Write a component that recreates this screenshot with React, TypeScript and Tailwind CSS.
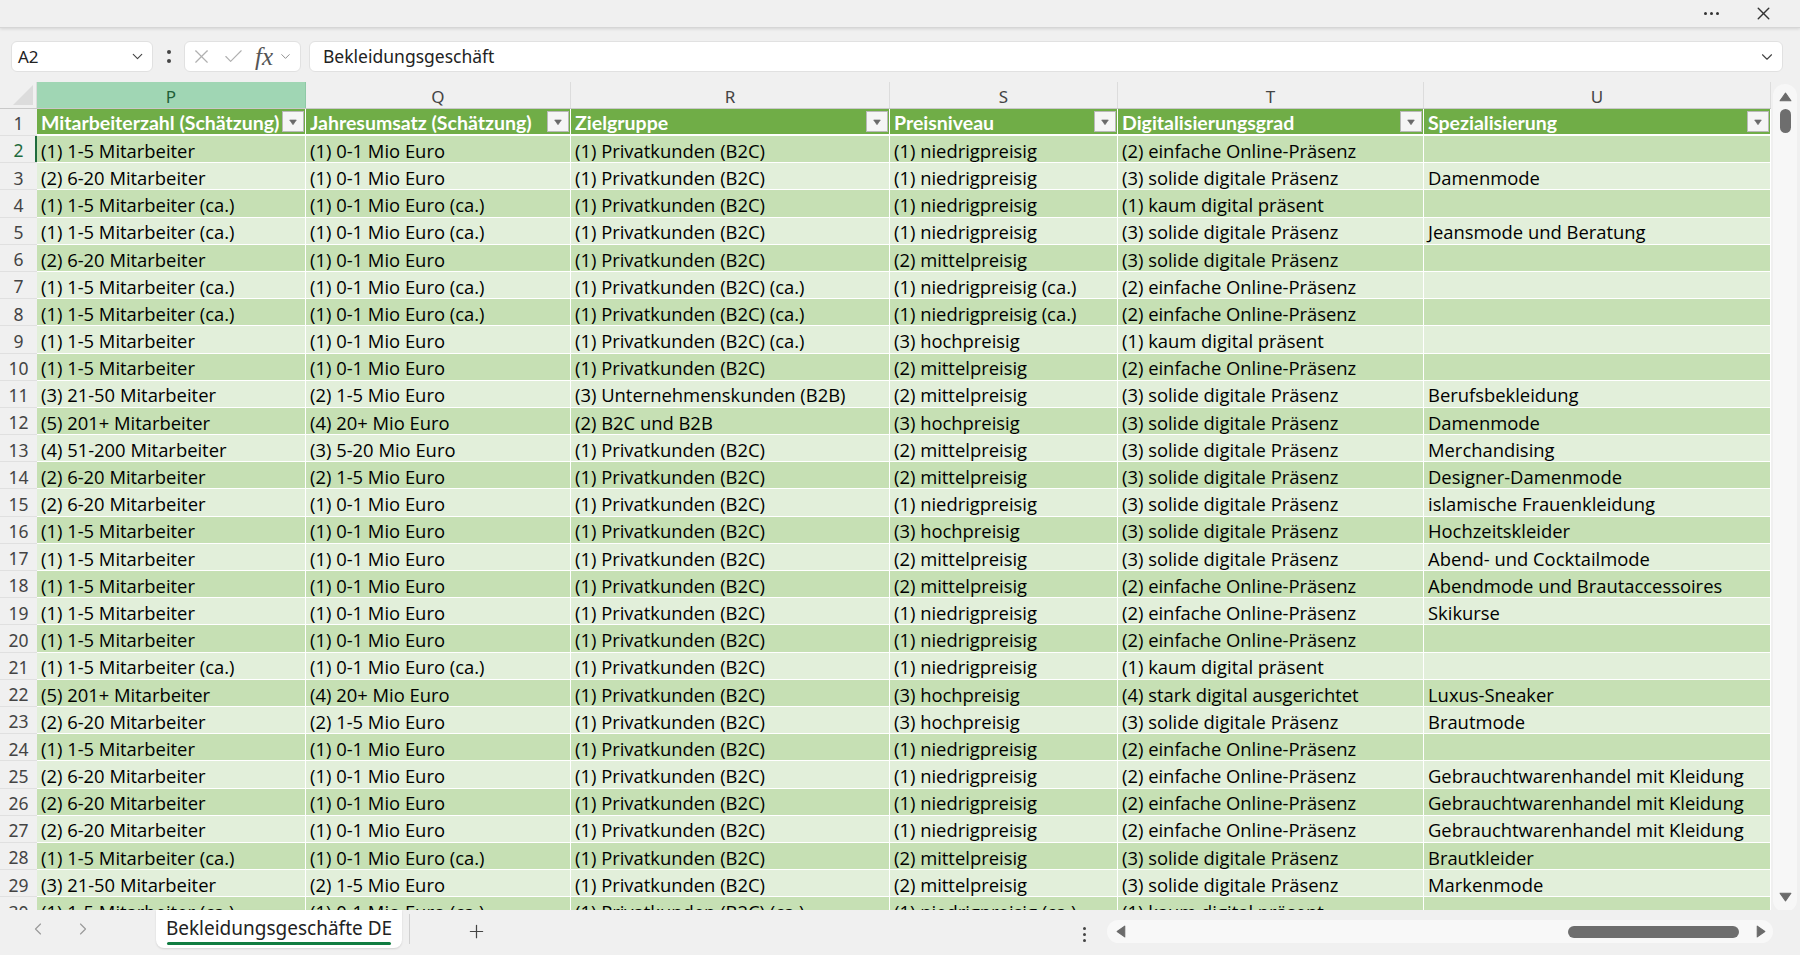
import { ChevronDown, ChevronLeft, ChevronRight, Check, Plus, X } from "lucide-react";

const DATA_FONT = { fontFamily: '"Open Sans", "Noto Sans", sans-serif' };
const HEAD_FONT = { fontFamily: 'Lato, "Open Sans", sans-serif' };
const UI_FONT = { fontFamily: '"Noto Sans", "Open Sans", sans-serif' };

type Col = { letter: string; title: string; width: string };

const columns: Col[] = [
  { letter: "P", title: "Mitarbeiterzahl (Schätzung)", width: "w-[269px]" },
  { letter: "Q", title: "Jahresumsatz (Schätzung)", width: "w-[265px]" },
  { letter: "R", title: "Zielgruppe", width: "w-[319px]" },
  { letter: "S", title: "Preisniveau", width: "w-[228px]" },
  { letter: "T", title: "Digitalisierungsgrad", width: "w-[306px]" },
  { letter: "U", title: "Spezialisierung", width: "w-[347px]" },
];

const M1 = "(1) 1-5 Mitarbeiter";
const M1c = "(1) 1-5 Mitarbeiter (ca.)";
const M2 = "(2) 6-20 Mitarbeiter";
const M3 = "(3) 21-50 Mitarbeiter";
const U1 = "(1) 0-1 Mio Euro";
const U1c = "(1) 0-1 Mio Euro (ca.)";
const U2 = "(2) 1-5 Mio Euro";
const B2C = "(1) Privatkunden (B2C)";
const B2Cc = "(1) Privatkunden (B2C) (ca.)";
const NP = "(1) niedrigpreisig";
const NPc = "(1) niedrigpreisig (ca.)";
const MP = "(2) mittelpreisig";
const HP = "(3) hochpreisig";
const D1 = "(1) kaum digital präsent";
const D2 = "(2) einfache Online-Präsenz";
const D3 = "(3) solide digitale Präsenz";
const GW = "Gebrauchtwarenhandel mit Kleidung";

const rows: string[][] = [
  [M1, U1, B2C, NP, D2, ""],
  [M2, U1, B2C, NP, D3, "Damenmode"],
  [M1c, U1c, B2C, NP, D1, ""],
  [M1c, U1c, B2C, NP, D3, "Jeansmode und Beratung"],
  [M2, U1, B2C, MP, D3, ""],
  [M1c, U1c, B2Cc, NPc, D2, ""],
  [M1c, U1c, B2Cc, NPc, D2, ""],
  [M1, U1, B2Cc, HP, D1, ""],
  [M1, U1, B2C, MP, D2, ""],
  [M3, U2, "(3) Unternehmenskunden (B2B)", MP, D3, "Berufsbekleidung"],
  ["(5) 201+ Mitarbeiter", "(4) 20+ Mio Euro", "(2) B2C und B2B", HP, D3, "Damenmode"],
  ["(4) 51-200 Mitarbeiter", "(3) 5-20 Mio Euro", B2C, MP, D3, "Merchandising"],
  [M2, U2, B2C, MP, D3, "Designer-Damenmode"],
  [M2, U1, B2C, NP, D3, "islamische Frauenkleidung"],
  [M1, U1, B2C, HP, D3, "Hochzeitskleider"],
  [M1, U1, B2C, MP, D3, "Abend- und Cocktailmode"],
  [M1, U1, B2C, MP, D2, "Abendmode und Brautaccessoires"],
  [M1, U1, B2C, NP, D2, "Skikurse"],
  [M1, U1, B2C, NP, D2, ""],
  [M1c, U1c, B2C, NP, D1, ""],
  ["(5) 201+ Mitarbeiter", "(4) 20+ Mio Euro", B2C, HP, "(4) stark digital ausgerichtet", "Luxus-Sneaker"],
  [M2, U2, B2C, HP, D3, "Brautmode"],
  [M1, U1, B2C, NP, D2, ""],
  [M2, U1, B2C, NP, D2, GW],
  [M2, U1, B2C, NP, D2, GW],
  [M2, U1, B2C, NP, D2, GW],
  [M1c, U1c, B2C, MP, D3, "Brautkleider"],
  [M3, U2, B2C, MP, D3, "Markenmode"],
  [M1c, U1c, B2Cc, NPc, D1, ""],
];

function Triangle({ dir, className }: { dir: "up" | "down" | "left" | "right"; className?: string }) {
  const pts = {
    up: "1,9 6,2 11,9",
    down: "1,3 11,3 6,10",
    left: "9,1 9,11 2,6",
    right: "3,1 3,11 10,6",
  }[dir];
  return (
    <svg viewBox="0 0 12 12" className={className}>
      <polygon points={pts} fill="currentColor" strokeLinejoin="round" stroke="currentColor" strokeWidth="1" />
    </svg>
  );
}

function FilterButton() {
  return (
    <div className="ml-auto mr-px flex h-[21px] w-[22px] shrink-0 items-center justify-center border border-[#b9b9b9] bg-[#f5f5f5] text-[#6a6a6a]">
      <Triangle dir="down" className="h-[8px] w-[8px]" />
    </div>
  );
}

function TopBar() {
  return (
    <div className="flex h-[28px] shrink-0 items-center justify-end border-b border-[#d6d6d6] bg-[#f0f0f0] pr-[26px] shadow-[0_1px_3px_rgba(0,0,0,0.12)]">
      <div className="flex items-center gap-[3px]">
        <span className="h-[3px] w-[3px] rounded-full bg-[#333]" />
        <span className="h-[3px] w-[3px] rounded-full bg-[#333]" />
        <span className="h-[3px] w-[3px] rounded-full bg-[#333]" />
      </div>
      <X className="ml-[34px] h-[21px] w-[21px] text-[#333]" strokeWidth={1.6} />
    </div>
  );
}

function FormulaBar() {
  return (
    <div className="mt-[13px] flex h-[31px] shrink-0 items-stretch pl-[11px] pr-[17px]" style={UI_FONT}>
      <div className="flex w-[142px] items-center rounded-md border border-[#e1e1e1] bg-white pl-[6px] pr-[6px]">
        <span className="text-[17px] text-[#222]">A2</span>
        <ChevronDown className="ml-auto h-[17px] w-[17px] text-[#444]" strokeWidth={1.6} />
      </div>
      <div className="flex w-[31px] flex-col items-center justify-center gap-[5px]">
        <span className="h-[4px] w-[4px] rounded-full bg-[#444]" />
        <span className="h-[4px] w-[4px] rounded-full bg-[#444]" />
      </div>
      <div className="flex w-[117px] items-center rounded-md border border-[#e1e1e1] bg-white pl-[5px]">
        <X className="h-[23px] w-[23px] text-[#b0b0b0]" strokeWidth={1.2} />
        <Check className="ml-[9px] h-[23px] w-[23px] text-[#b0b0b0]" strokeWidth={1.2} />
        <span
          className="ml-[10px] text-[25px] italic leading-none text-[#555]"
          style={{ fontFamily: '"Liberation Serif", serif' }}
        >
          fx
        </span>
        <ChevronDown className="ml-[5px] h-[15px] w-[15px] text-[#888]" strokeWidth={1.5} />
      </div>
      <div className="ml-[8px] flex flex-1 items-center rounded-md border border-[#e1e1e1] bg-white pl-[13px] pr-[6px]">
        <span className="text-[17.5px] text-[#222]">Bekleidungsgeschäft</span>
        <ChevronDown className="ml-auto h-[18px] w-[18px] text-[#444]" strokeWidth={1.5} />
      </div>
    </div>
  );
}

function ColumnHeaders() {
  return (
    <div className="flex h-[27px] shrink-0 border-b border-[#c9c9c9]" style={UI_FONT}>
      <div className="relative w-[37px] shrink-0 border-r border-[#dcdcdc]">
        <div className="absolute bottom-[3px] right-[3px] h-0 w-0 border-b-[20px] border-l-[20px] border-b-[#dcdcdc] border-l-transparent" />
      </div>
      {columns.map((c, i) => (
        <div
          key={c.letter}
          className={`${c.width} flex shrink-0 items-center justify-center border-r pt-[3px] text-[17px] ${
            i === 0 ? "border-[#8fc9a6] bg-[#a0d6b4] text-[#1f5f38]" : "border-[#dcdcdc] text-[#444]"
          }`}
        >
          {c.letter}
        </div>
      ))}
    </div>
  );
}

function RowNumber({ n, active }: { n: number; active?: boolean }) {
  return (
    <div
      className={`relative flex h-full w-[37px] shrink-0 items-center justify-center border-b border-[#e0e0e0] pt-[3px] text-[17.5px] ${
        active ? "text-[#1f6b3e]" : "text-[#444]"
      }`}
      style={UI_FONT}
    >
      {n}
      {active && <div className="absolute right-0 top-0 h-full w-[2px] bg-[#1f6b3e]" />}
    </div>
  );
}

function Sheet() {
  return (
    <div className="flex w-[1771px] shrink-0 flex-col overflow-hidden">
      <ColumnHeaders />
      <div className="flex h-[27px] shrink-0">
        <RowNumber n={1} />
        {columns.map((c) => (
          <div
            key={c.title}
            className={`${c.width} flex shrink-0 items-center border-b-2 border-r border-white bg-[#70ad47] pl-[4px] text-[19.5px] font-bold text-white`}
            style={HEAD_FONT}
          >
            <span className="truncate pt-[2px]">{c.title}</span>
            <FilterButton />
          </div>
        ))}
      </div>
      {rows.map((r, ri) => {
        const dark = ri % 2 === 0;
        return (
          <div key={ri} className="flex h-[27.2px] shrink-0">
            <RowNumber n={ri + 2} active={ri === 0} />
            {r.map((v, ci) => (
              <div
                key={ci}
                className={`${columns[ci].width} flex shrink-0 items-center overflow-hidden whitespace-nowrap border-b border-r border-white pl-[4px] pt-[3px] text-[18.4px] text-black ${
                  dark ? "bg-[#c6e0b4]" : "bg-[#e2efda]"
                }`}
                style={DATA_FONT}
              >
                {v}
              </div>
            ))}
          </div>
        );
      })}
    </div>
  );
}

function VerticalScroll() {
  return (
    <div className="ml-[2px] mt-[2px] flex h-[828px] w-[24px] flex-col items-center rounded-full bg-[#f7f7f7] pt-[7px] text-[#6b6b6b]">
      <Triangle dir="up" className="h-[13px] w-[13px]" />
      <div className="mt-[5px] h-[24px] w-[11px] rounded-full bg-[#6e6e6e]" />
      <Triangle dir="down" className="mb-[9px] mt-auto h-[13px] w-[13px]" />
    </div>
  );
}

function SheetTabs() {
  return (
    <div className="flex h-[45px] shrink-0 items-start bg-[#f0f0f0] pr-[27px]" style={UI_FONT}>
      <div className="flex h-[38px] items-center pl-[28px] text-[#9a9a9a]">
        <ChevronLeft className="h-[20px] w-[20px]" strokeWidth={1.4} />
        <ChevronRight className="ml-[25px] h-[20px] w-[20px]" strokeWidth={1.4} />
      </div>
      <div className="ml-[63px] flex h-[38px] w-[246px] flex-col items-center rounded-b-lg bg-white shadow-[0_1px_2px_rgba(0,0,0,0.12)]">
        <span className="mt-[6px] text-[19px] leading-[24px] text-[#222]">Bekleidungsgeschäfte DE</span>
        <div className="mb-[3px] mt-auto h-[3px] w-[224px] rounded-full bg-[#107c41]" />
      </div>
      <div className="ml-[7px] mt-[4px] h-[30px] w-px bg-[#d0d0d0]" />
      <Plus className="ml-[56px] mt-[11px] h-[21px] w-[21px] text-[#444]" strokeWidth={1.4} />
      <div className="ml-auto flex items-start">
        <div className="mt-[17px] flex flex-col items-center gap-[3px]">
          <span className="h-[3px] w-[3px] rounded-full bg-[#444]" />
          <span className="h-[3px] w-[3px] rounded-full bg-[#444]" />
          <span className="h-[3px] w-[3px] rounded-full bg-[#444]" />
        </div>
        <div className="ml-[21px] mt-[10px] flex h-[23px] w-[666px] items-center rounded-full bg-[#f8f8f8] pl-[8px] pr-[6px] text-[#6b6b6b]">
          <Triangle dir="left" className="h-[13px] w-[13px]" />
          <div className="ml-auto h-[12px] w-[171px] rounded-full bg-[#6e6e6e]" />
          <Triangle dir="right" className="ml-[15px] h-[13px] w-[13px]" />
        </div>
      </div>
    </div>
  );
}

export default function App() {
  return (
    <div className="flex h-[955px] w-[1800px] flex-col overflow-hidden bg-[#f0f0f0]">
      <TopBar />
      <FormulaBar />
      <div className="mt-[10px] flex h-[828px] shrink-0">
        <Sheet />
        <VerticalScroll />
      </div>
      <SheetTabs />
    </div>
  );
}
